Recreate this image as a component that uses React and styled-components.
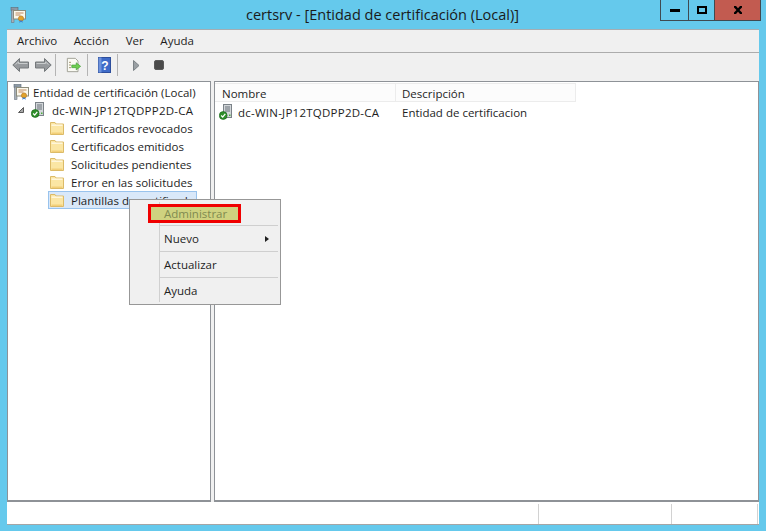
import React from 'react';
import styled, { createGlobalStyle } from 'styled-components';

const GlobalStyle = createGlobalStyle`
  html, body { margin: 0; padding: 0; background: #65c9ec; }
  body { font-family: "Open Sans", "Noto Sans", "Liberation Sans", sans-serif; font-size: 11.5px; color: #1e1e1e; }
`;

const Win = styled.div`
  width: 766px;
  height: 531px;
  display: flex;
  flex-direction: column;
  background: #65c9ec;
  overflow: hidden;
`;

const TitleBar = styled.div`
  height: 29px;
  flex: none;
  display: flex;
  align-items: flex-start;
  padding: 0 5px 0 10px;
`;

const AppIcon = styled.div`
  width: 16px;
  height: 16px;
  margin-top: 7px;
`;

const Title = styled.div`
  flex: 1;
  text-align: center;
  font-size: 14.5px;
  line-height: 29px;
  padding-left: 79px;
  color: #1a1a1a;
  white-space: nowrap;
`;

const WinButtons = styled.div`
  display: flex;
  height: 20px;
  border: 1px solid #3f4a50;
  border-top: none;
`;

const WinButton = styled.div`
  width: ${p => p.$w}px;
  display: flex;
  align-items: center;
  justify-content: center;
  background: ${p => (p.$close ? '#c25b50' : 'transparent')};
  border-left: ${p => (p.$first ? 'none' : '1px solid #3f4a50')};
`;

const Client = styled.div`
  flex: 1;
  margin: 0 7px 6px 7px;
  display: flex;
  flex-direction: column;
  background: #f0f0f0;
  border-top: 1px solid #a5adb2;
  position: relative;
  min-height: 0;
`;

const MenuBar = styled.div`
  height: 22px;
  flex: none;
  display: flex;
  align-items: center;
  gap: 16.7px;
  padding-left: 10px;
  border-bottom: 1px solid #acacac;
`;

const MenuLabel = styled.span`
  line-height: 22px;
`;

const ToolBar = styled.div`
  height: 28px;
  flex: none;
  display: flex;
  align-items: center;
  padding: 0 0 4px 3px;
  box-sizing: border-box;
`;

const ToolSlot = styled.div`
  width: ${p => p.$w}px;
  height: 18px;
  box-sizing: border-box;
  padding-left: ${p => p.$pad}px;
  display: flex;
  align-items: center;
  flex: none;
`;

const ToolSep = styled.div`
  width: 1px;
  height: 22px;
  flex: none;
  background: #b4b4b4;
`;

const Panes = styled.div`
  flex: 1;
  display: flex;
  min-height: 0;
  gap: 3px;
`;

const Pane = styled.div`
  background: #fff;
  border: 1px solid #8e9297;
  border-bottom-width: 2px;
  width: ${p => (p.$w ? `${p.$w}px` : 'auto')};
  flex: ${p => (p.$w ? 'none' : '1')};
  box-sizing: border-box;
  min-width: 0;
`;

const Tree = styled.div`
  padding-top: 1px;
`;

const TreeRow = styled.div`
  height: 18px;
  display: flex;
  align-items: center;
  margin-left: ${p => p.$indent}px;
  width: ${p => (p.$selected ? '149px' : 'auto')};
  box-sizing: border-box;
  background: ${p => (p.$selected ? '#d9e8f9' : 'transparent')};
  box-shadow: ${p => (p.$selected ? 'inset 0 0 0 1px #99c3ed' : 'none')};
  white-space: nowrap;
  overflow: hidden;
`;

const RowIcon = styled.span`
  width: ${p => p.$w || 16}px;
  height: 16px;
  flex: none;
  display: flex;
  align-items: center;
  margin: 0 ${p => p.$gap || 4}px 0 ${p => p.$left || 0}px;
`;

const ServerName = styled.span`
  letter-spacing: 0.24px;
`;

const ExpanderSlot = styled.span`
  width: 13px;
  flex: none;
  display: flex;
  align-items: center;
`;

const Header = styled.div`
  height: 21px;
  display: flex;
  background: #fff;
`;

const HeaderCell = styled.div`
  width: ${p => p.$w}px;
  box-sizing: border-box;
  height: 19px;
  margin-top: 1px;
  padding-left: ${p => p.$pad}px;
  line-height: 19px;
  background: #fcfcfc;
  border: 1px solid #ececec;
  border-left: none;
`;

const ListRow = styled.div`
  height: 18px;
  display: flex;
  align-items: center;
`;

const ListCell = styled.div`
  width: ${p => p.$w}px;
  flex: none;
  display: flex;
  align-items: center;
  white-space: nowrap;
`;

const StatusBar = styled.div`
  height: 23px;
  flex: none;
  display: flex;
  background: #fff;
  border-bottom: 1px solid #a5a5a5;
  box-sizing: border-box;
  padding-top: 2px;
`;

const StatusCell = styled.div`
  width: ${p => (p.$w ? `${p.$w}px` : 'auto')};
  flex: ${p => (p.$w ? 'none' : '1')};
  box-sizing: border-box;
  border-right: ${p => (p.$line ? '1px solid #d2d2d2' : 'none')};
`;

const ContextMenu = styled.div`
  position: absolute;
  left: 122px;
  top: 169px;
  width: 152px;
  height: 106px;
  box-sizing: border-box;
  background: #f0f0f0;
  border: 1px solid #979797;
  padding: 3px 2px 0 2px;
  z-index: 5;
  &::before {
    content: '';
    position: absolute;
    left: 29px;
    top: 2px;
    bottom: 2px;
    width: 1px;
    background: #d0d0d0;
  }
`;

const MenuItem = styled.div`
  height: 21px;
  display: flex;
  align-items: center;
  justify-content: space-between;
  padding: 0 9px 0 32px;
  position: relative;
  color: ${p => (p.$disabled ? '#7f8a50' : '#1e1e1e')};
`;

const Highlight = styled.div`
  position: absolute;
  left: 16px;
  top: 1px;
  width: 93px;
  height: 19px;
  box-sizing: border-box;
  background: #cfd27f;
  border: 3px solid #f00000;
`;

const ItemText = styled.span`
  position: relative;
`;

const MenuSep = styled.div`
  height: 1px;
  margin: ${p => (p.$first ? '1px' : '2px')} 0 2px 28px;
  background: #cfcfcf;
`;

const Arrow = styled.span`
  width: 0;
  height: 0;
  border-style: solid;
  border-width: 3.5px 0 3.5px 4px;
  border-color: transparent transparent transparent #202020;
`;

const CertIcon = () => (
  <svg width="16" height="16" viewBox="0 0 16 16">
    <rect x="1" y="0.5" width="7" height="3" fill="#8d9aa6" stroke="#5d6a76" strokeWidth="0.6" />
    <rect x="1.5" y="3" width="2.5" height="12.5" fill="#a8b0b8" stroke="#6c7680" strokeWidth="0.6" />
    <rect x="3.5" y="3.5" width="12" height="8.5" fill="#fbf8ec" stroke="#8c8c7c" />
    <path d="M5.5 6h8M5.5 8h5" stroke="#c08a60" strokeWidth="1" />
    <circle cx="11" cy="11.5" r="2.6" fill="#e2a32b" stroke="#b0701a" strokeWidth="0.6" />
    <path d="M9.8 13.5l-.6 2.2 1.8-.9 1.8.9-.6-2.2" fill="#3c7fd0" />
  </svg>
);

const ServerIcon = () => (
  <svg width="16" height="16" viewBox="0 0 16 16">
    <rect x="4.5" y="0.5" width="8" height="13" fill="#d2d6d9" stroke="#7b8288" />
    <path d="M6 3h5M6 5h5M6 7h5" stroke="#6a737a" strokeWidth="1" />
    <rect x="10" y="10.5" width="1.5" height="1.5" fill="#4caf3c" />
    <circle cx="4.2" cy="11.5" r="3.9" fill="#2f8f2a" stroke="#1e6a1e" strokeWidth="0.7" />
    <path d="M2.2 11.5l1.5 1.6 2.6-3.2" fill="none" stroke="#fff" strokeWidth="1.3" />
  </svg>
);

const FolderIcon = () => (
  <svg width="14" height="14" viewBox="0 0 14 14">
    <path d="M.5 1.5h4.5l1 1.5h7.5v10.5H.5z" fill="#fbe6a4" stroke="#dcbb68" />
    <rect x="1.5" y="3.5" width="11" height="1.4" fill="#fff8e0" />
    <rect x="1.5" y="11.5" width="11" height="1.5" fill="#f3cf79" />
  </svg>
);

const ExpanderIcon = () => (
  <svg width="6" height="6" viewBox="0 0 6 6">
    <path d="M5.5.5v5h-5z" fill="#a8a8a8" stroke="#595959" />
  </svg>
);

const NavArrow = ({ flip }) => (
  <svg width="17" height="16" viewBox="0 0 17 16" style={flip ? { transform: 'scaleX(-1)' } : undefined}>
    <path d="M.8 8l6.7-6.5V5h9v6h-9v3.5z" fill="#979a9d" stroke="#74787b" />
    <path d="M3.5 7.5l3-2.5v1.5h9" fill="none" stroke="#c9cccd" />
  </svg>
);

const ExportIcon = () => (
  <svg width="16" height="16" viewBox="0 0 18 18">
    <path d="M1.5 1.5h9l3 3v12h-12z" fill="#fbfbf4" stroke="#9a9a8e" />
    <path d="M3.5 6h2M3.5 9h2M3.5 12h2" stroke="#8a7a50" />
    <path d="M6.5 9h5V6.5l5 4-5 4V12h-5z" fill="#6fcf50" stroke="#3f9a34" strokeWidth="0.7" />
  </svg>
);

const HelpIcon = () => (
  <svg width="13" height="16" viewBox="0 0 13 16">
    <rect x="0.5" y="0.5" width="12" height="15" fill="#3f6bc8" stroke="#2d4e9c" />
    <rect x="0.5" y="0.5" width="3" height="15" fill="#6f93dc" />
    <text x="7" y="12.5" fontFamily="Liberation Sans" fontWeight="700" fontSize="12" fill="#fff" textAnchor="middle">?</text>
  </svg>
);

const PlayIcon = () => (
  <svg width="7" height="11" viewBox="0 0 7 11">
    <path d="M.5.5l5.5 5-5.5 5z" fill="#9aa0a4" stroke="#7c8286" />
  </svg>
);

const StopIcon = () => (
  <svg width="10" height="10" viewBox="0 0 10 10">
    <rect x="0.5" y="0.5" width="9" height="9" rx="1.5" fill="#4a4a4a" stroke="#5a5a5a" />
  </svg>
);

const folders = [
  'Certificados revocados',
  'Certificados emitidos',
  'Solicitudes pendientes',
  'Error en las solicitudes',
];

export default function App() {
  return (
    <Win>
      <GlobalStyle />
      <TitleBar>
        <AppIcon><CertIcon /></AppIcon>
        <Title>certsrv - [Entidad de certificación (Local)]</Title>
        <WinButtons>
          <WinButton $w={27} $first>
            <svg width="10" height="3"><rect width="10" height="3" fill="#000" /></svg>
          </WinButton>
          <WinButton $w={25}>
            <svg width="10" height="8"><rect x="1" y="1" width="8" height="6" fill="none" stroke="#000" strokeWidth="2" /></svg>
          </WinButton>
          <WinButton $w={45} $close>
            <svg width="10" height="8"><path d="M1 0h2l2 2.2L7 0h2v1.5L6.5 4 9 6.5V8H7L5 5.8 3 8H1V6.5L3.5 4 1 1.5z" fill="#000" /></svg>
          </WinButton>
        </WinButtons>
      </TitleBar>
      <Client>
        <MenuBar>
          <MenuLabel>Archivo</MenuLabel>
          <MenuLabel>Acción</MenuLabel>
          <MenuLabel>Ver</MenuLabel>
          <MenuLabel>Ayuda</MenuLabel>
        </MenuBar>
        <ToolBar>
          <ToolSlot $w={20} $pad={2}><NavArrow /></ToolSlot>
          <ToolSlot $w={25} $pad={5}><NavArrow flip /></ToolSlot>
          <ToolSep />
          <ToolSlot $w={31} $pad={10}><ExportIcon /></ToolSlot>
          <ToolSep />
          <ToolSlot $w={29} $pad={10}><HelpIcon /></ToolSlot>
          <ToolSep />
          <ToolSlot $w={36} $pad={15}><PlayIcon /></ToolSlot>
          <ToolSlot $w={10} $pad={0}><StopIcon /></ToolSlot>
        </ToolBar>
        <Panes>
          <Pane $w={204}>
            <Tree>
              <TreeRow $indent={5}>
                <RowIcon $gap={4}><CertIcon /></RowIcon>
                Entidad de certificación (Local)
              </TreeRow>
              <TreeRow $indent={10}>
                <ExpanderSlot><ExpanderIcon /></ExpanderSlot>
                <RowIcon $gap={5}><ServerIcon /></RowIcon>
                <ServerName>dc-WIN-JP12TQDPP2D-CA</ServerName>
              </TreeRow>
              {folders.map(name => (
                <TreeRow $indent={40} key={name}>
                  <RowIcon $w={14} $gap={7} $left={2}><FolderIcon /></RowIcon>
                  {name}
                </TreeRow>
              ))}
              <TreeRow $indent={40} $selected>
                <RowIcon $w={14} $gap={7} $left={2}><FolderIcon /></RowIcon>
                Plantillas de certificado
              </TreeRow>
            </Tree>
          </Pane>
          <Pane>
            <Header>
              <HeaderCell $w={181} $pad={7}>Nombre</HeaderCell>
              <HeaderCell $w={180} $pad={6}>Descripción</HeaderCell>
            </Header>
            <ListRow>
              <ListCell $w={187}>
                <RowIcon $gap={3} $left={4}><ServerIcon /></RowIcon>
                <ServerName>dc-WIN-JP12TQDPP2D-CA</ServerName>
              </ListCell>
              <ListCell $w={200}>Entidad de certificacion</ListCell>
            </ListRow>
          </Pane>
        </Panes>
        <StatusBar>
          <StatusCell $line />
          <StatusCell $w={133} $line />
          <StatusCell $w={86} $line />
          <StatusCell $w={1} />
        </StatusBar>
        <ContextMenu>
          <MenuItem $disabled>
            <Highlight />
            <ItemText>Administrar</ItemText>
          </MenuItem>
          <MenuSep $first />
          <MenuItem>
            <ItemText>Nuevo</ItemText>
            <Arrow />
          </MenuItem>
          <MenuSep />
          <MenuItem><ItemText>Actualizar</ItemText></MenuItem>
          <MenuSep />
          <MenuItem><ItemText>Ayuda</ItemText></MenuItem>
        </ContextMenu>
      </Client>
    </Win>
  );
}
